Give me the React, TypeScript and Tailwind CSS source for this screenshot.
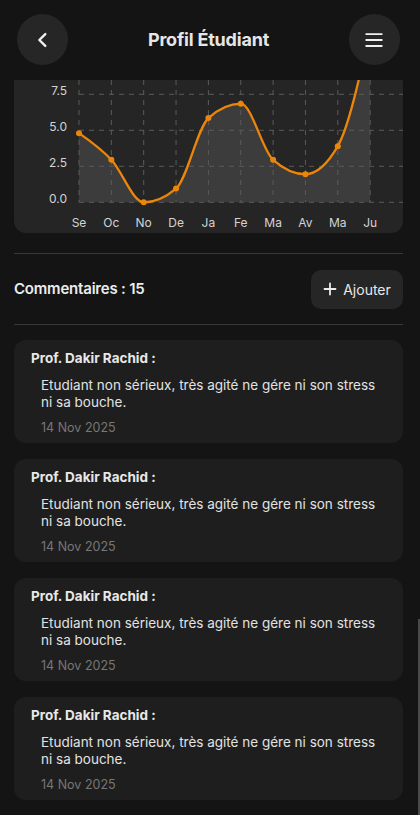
import React from "react";

type P = { x: number; y: number };

function monotonePath(pts: P[]): string {
  const n = pts.length;
  const dx: number[] = [];
  const m: number[] = [];
  for (let i = 0; i < n - 1; i++) {
    dx.push(pts[i + 1].x - pts[i].x);
    m.push((pts[i + 1].y - pts[i].y) / (pts[i + 1].x - pts[i].x));
  }
  const t: number[] = new Array(n).fill(0);
  for (let i = 1; i < n - 1; i++) {
    const s0 = m[i - 1];
    const s1 = m[i];
    const h0 = dx[i - 1];
    const h1 = dx[i];
    const p = (s0 * h1 + s1 * h0) / (h0 + h1);
    t[i] =
      (Math.sign(s0) + Math.sign(s1)) *
        Math.min(Math.abs(s0), Math.abs(s1), 0.5 * Math.abs(p)) || 0;
  }
  t[0] = (3 * m[0] - t[1]) / 2;
  t[n - 1] = (3 * m[n - 2] - t[n - 2]) / 2;
  let d = `M${pts[0].x},${pts[0].y}`;
  for (let i = 0; i < n - 1; i++) {
    const h = dx[i] / 3;
    d += ` C${pts[i].x + h},${pts[i].y + h * t[i]} ${pts[i + 1].x - h},${
      pts[i + 1].y - h * t[i + 1]
    } ${pts[i + 1].x},${pts[i + 1].y}`;
  }
  return d;
}

const labels = ["Se", "Oc", "No", "De", "Ja", "Fe", "Ma", "Av", "Ma", "Ju"];
const values = [4.8, 2.95, 0, 0.95, 5.85, 6.85, 2.95, 1.95, 3.9, 12];
const X0 = 65;
const STEP = 32.35;
const BASE = 122.3;
const UNIT = 14.4;

function Chart() {
  const pts = values.map((v, i) => ({ x: X0 + i * STEP, y: BASE - v * UNIT }));
  const line = monotonePath(pts);
  const area = `${line} L${pts[pts.length - 1].x},${BASE} L${pts[0].x},${BASE} Z`;
  const gridY = [14.3, 50.3, 86.3, 122.3];
  const yl = ["7.5", "5.0", "2.5", "0.0"];
  return (
    <svg width="389" height="153" className="block">
      <path d={area} fill="#3c3c3c" />
      {gridY.map((y, i) => (
        <line
          key={i}
          x1={X0}
          x2={389}
          y1={y}
          y2={y}
          stroke="#5a5a5a"
          strokeWidth="1"
          strokeDasharray="5 5"
        />
      ))}
      {pts.map((p, i) => (
        <line
          key={i}
          x1={p.x}
          x2={p.x}
          y1={0}
          y2={BASE}
          stroke="#5a5a5a"
          strokeWidth="1"
          strokeDasharray="5 5"
        />
      ))}
      {gridY.map((y, i) => (
        <text
          key={i}
          x={53}
          y={y + 1}
          textAnchor="end"
          fontSize="12"
          fill="#d4d4d4"
          fontFamily="Inter, sans-serif"
        >
          {yl[i]}
        </text>
      ))}
      <path d={line} fill="none" stroke="#ec860b" strokeWidth="2.3" />
      {pts.slice(0, 9).map((p, i) => (
        <circle key={i} cx={p.x} cy={p.y} r="3" fill="#ec860b" />
      ))}
      {labels.map((l, i) => (
        <text
          key={i}
          x={X0 + i * STEP}
          y={147}
          textAnchor="middle"
          fontSize="12"
          fill="#d4d4d4"
          fontFamily="Inter, sans-serif"
        >
          {l}
        </text>
      ))}
    </svg>
  );
}

function Comment() {
  return (
    <div className="rounded-xl bg-[#1e1e1e] pl-[17px] pr-4 pt-[9px] pb-[6px]">
      <div className="text-[13.5px] font-bold leading-[18px] text-[#e8e8e8]">
        Prof. Dakir Rachid :
      </div>
      <div className="pl-[10px] mt-[10px] text-[13.5px] leading-[17px] text-[#e2e2e2]">
        Etudiant non sérieux, très agité ne gére ni son stress ni sa bouche.
      </div>
      <div className="pl-[10px] mt-[8px] text-[12.5px] leading-[18px] text-[#777777]">
        14 Nov 2025
      </div>
    </div>
  );
}

export default function App() {
  return (
    <div
      className="relative w-[420px] h-[815px] overflow-hidden bg-[#141414]"
      style={{ fontFamily: "Inter, 'Noto Sans', sans-serif" }}
    >
      <div className="w-[417px]">
        <div className="flex items-center justify-between h-[80px] pl-[17px] pr-[17px] pb-[1px]">
          <button className="w-[51px] h-[51px] rounded-full bg-[#262626] flex items-center justify-center">
            <svg width="22" height="22" viewBox="0 0 24 24" fill="none" stroke="#f0f0f0" strokeWidth="2.6" strokeLinecap="round" strokeLinejoin="round">
              <path d="M14.5 5.5 8 12l6.5 6.5" />
            </svg>
          </button>
          <div className="text-[18px] font-bold text-[#e6e6e6] tracking-[-0.2px]">
            Profil Étudiant
          </div>
          <button className="w-[51px] h-[51px] rounded-full bg-[#262626] flex items-center justify-center">
            <svg width="22" height="22" viewBox="0 0 24 24" fill="none" stroke="#f0f0f0" strokeWidth="2" strokeLinecap="round">
              <path d="M3.5 5.5h17M3.5 12h17M3.5 18.5h17" />
            </svg>
          </button>
        </div>
        <div className="mx-[14px] h-[153px] rounded-b-xl bg-[#252525] overflow-hidden">
          <Chart />
        </div>
        <div className="mx-[14px] mt-[20px] h-px bg-[#383838]" />
        <div className="mx-[14px] flex items-center justify-between h-[70px]">
          <div className="text-[15px] font-semibold text-[#ececec] tracking-[-0.2px]">Commentaires : 15</div>
          <button className="h-[39px] w-[92px] rounded-[10px] bg-[#262626] flex items-center justify-center gap-[6px] text-[14px] text-[#e8e8e8]">
            <svg width="14" height="14" viewBox="0 0 14 14" stroke="#ececec" strokeWidth="1.8" strokeLinecap="round">
              <path d="M7 1.5v11M1.5 7h11" />
            </svg>
            Ajouter
          </button>
        </div>
        <div className="mx-[14px] h-px bg-[#383838]" />
        <div className="mx-[14px] mt-[15px] flex flex-col gap-[16px]">
          <Comment />
          <Comment />
          <Comment />
          <Comment />
        </div>
      </div>
      <div className="absolute right-0 top-[619px] w-[2px] h-[196px] bg-[#4a4a4a]" />
    </div>
  );
}
